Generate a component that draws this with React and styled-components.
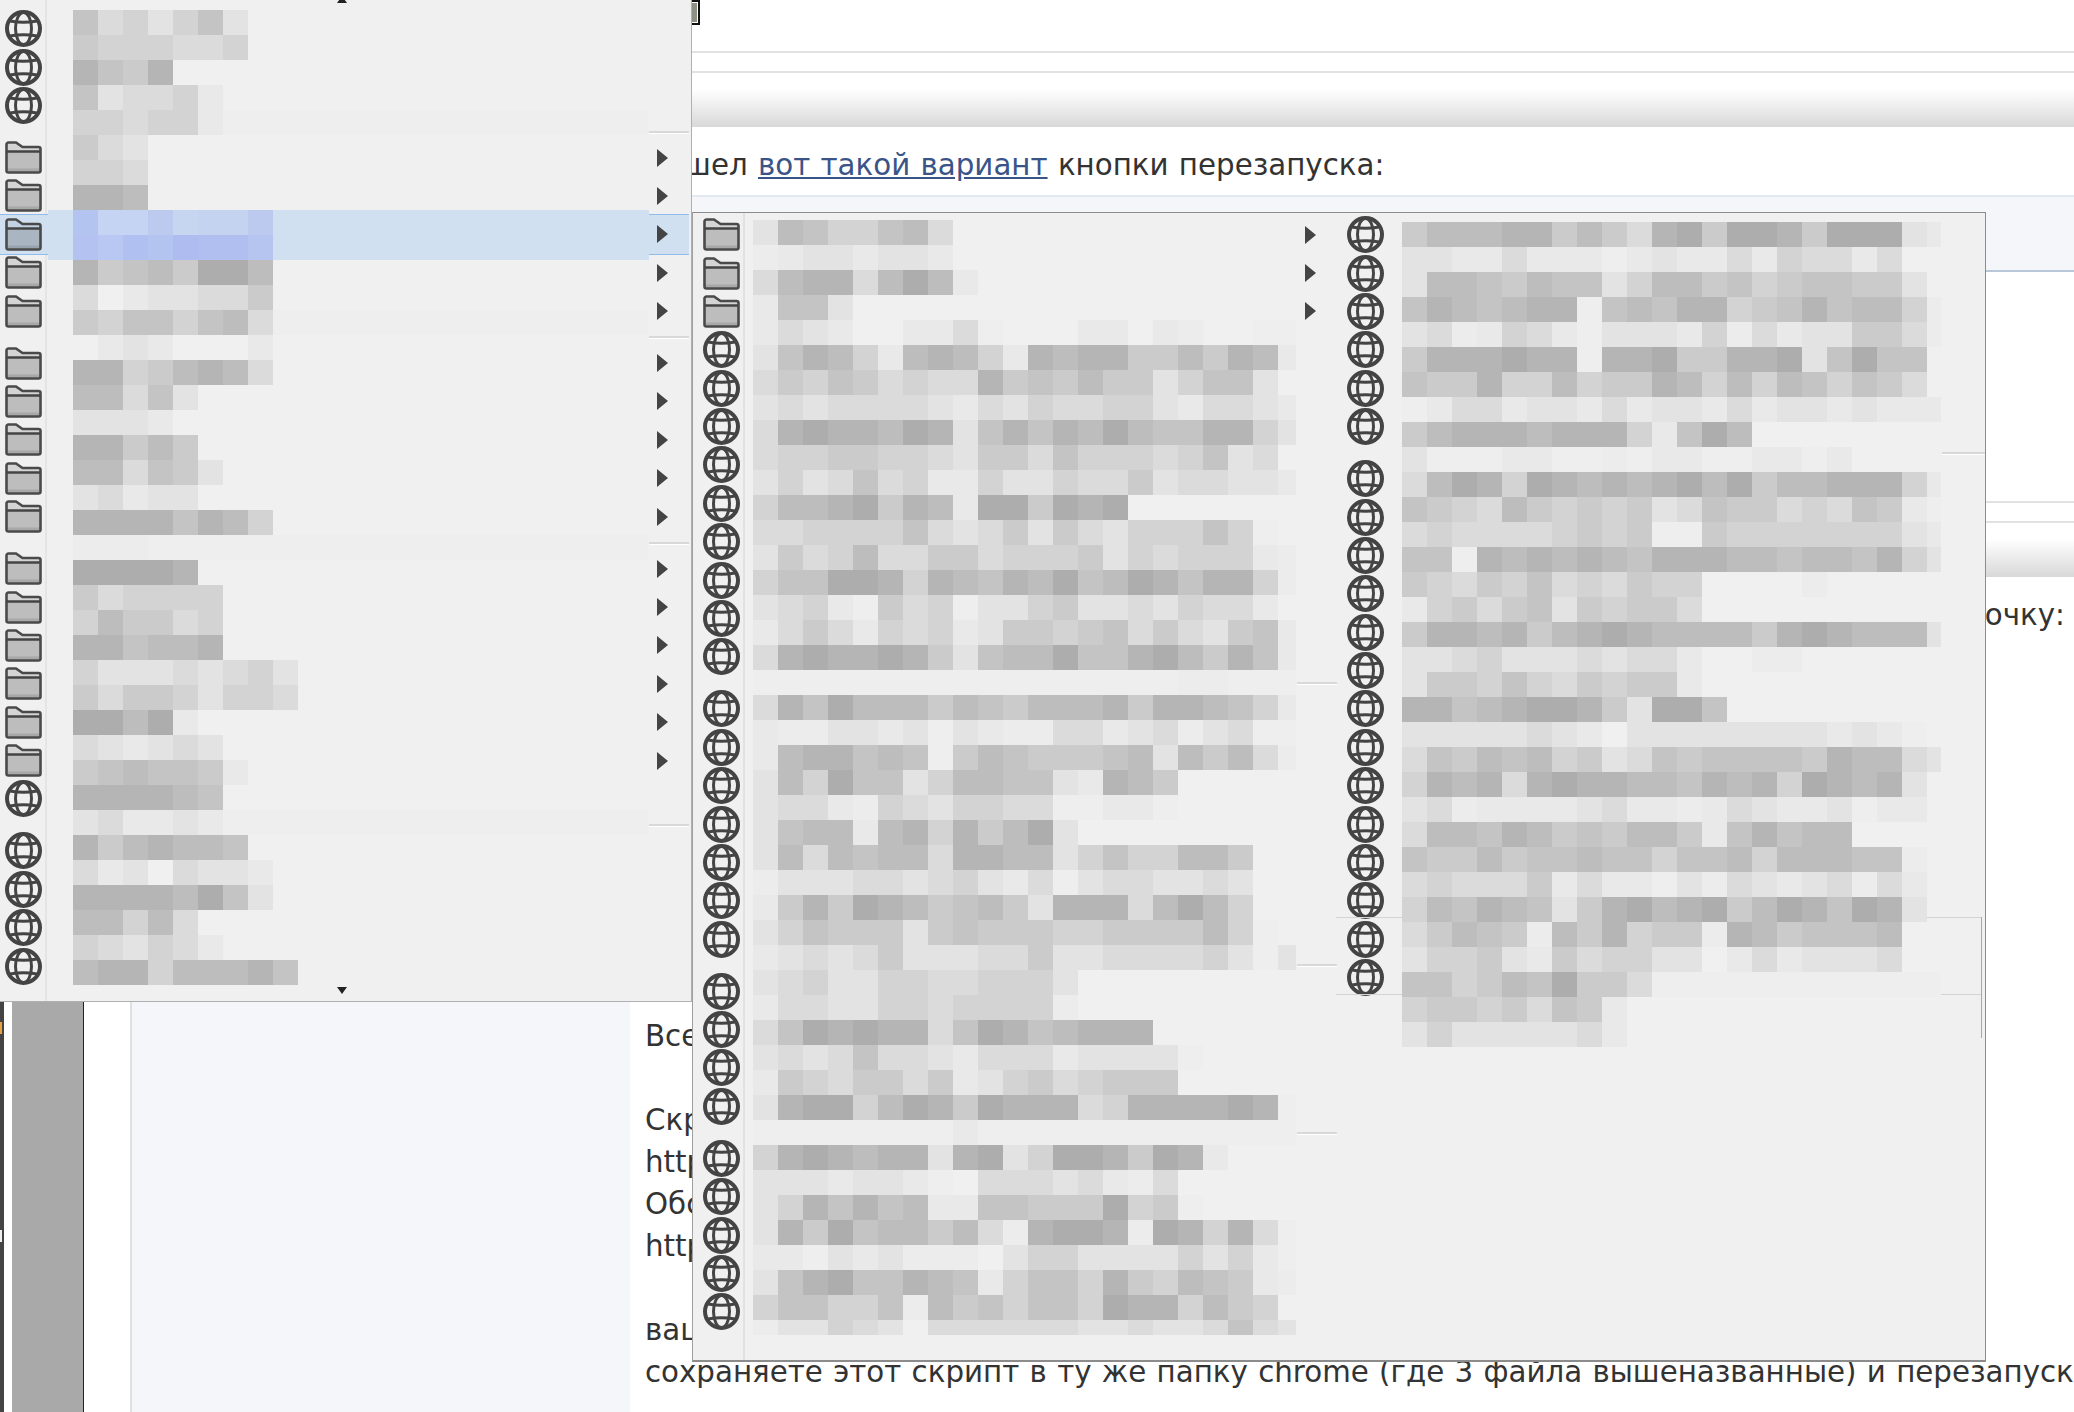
import styled, { createGlobalStyle } from "styled-components";

const GlobalStyle = createGlobalStyle`
  html, body {
    margin: 0;
    height: 100%;
    overflow: hidden;
    background: #fff;
  }
`;

// gray steps for the blurred (pixelated) menu labels
const SHADES = {
  0: "#adadad",
  1: "#b5b5b5",
  2: "#bdbdbd",
  3: "#c4c4c4",
  4: "#cbcbcb",
  5: "#d3d3d3",
  6: "#dbdbdb",
  7: "#e3e3e3",
  8: "#e9e9e9",
  9: "#f0f0f0",
  x: "#ececec",
  y: "#eeeeee",
};

const MENU_ONE_ROWS = [
  "3657537",
  "4555665",
  "1341",
  "376658",
  "556558~",
  "467",
  "556",
  "112",
  ["#b3c4f0", "#c4d4f2", "#c4d4f2", "#bccaf0", "#c6d6f0", "#c4d4f0", "#c4d4f0", "#bccaf0"],
  ["#b3c2f0", "#b8c8f2", "#b0c0f0", "#b4c4f0", "#aebcf0", "#b0bef0", "#b0bef0", "#b6c4f0"],
  "14324002",
  "69877664",
  "45335326~",
  "98789998",
  "11542126",
  "22637",
  "77789",
  "11424",
  "226347",
  "7687799",
  "11113125",
  "xxxyyyyy~",
  "00001",
  "465555",
  "524465",
  "113221",
  "577767657",
  "464457556",
  "00208",
  "6787679",
  "4323348",
  "111123",
  "768878~",
  "1421223",
  "68796778",
  "11112037",
  "22526",
  "567568",
  "211522213",
];

const MENU_TWO_ROWS = [
  "72355326",
  "x8778778",
  "621162028",
  "8337",
  "8678..886y...88.8x..yy",
  "7312582125812114424128",
  "6453465661434244753379",
  "7676666786756655786678",
  "6101120173131202331157",
  "6554455674463555653769",
  "7576365885775664766778",
  "522104128004010",
  "66555536764746755535y9",
  "746526644655547565558x",
  "533001512312032013115x",
  "7658y465y7754776756689",
  "8646856587445436467438",
  "6101101473220331024138",
  "yyyyyyyyyyyyyyyyyxxyyy",
  "6130222423422214112358",
  "8xx7787y78xx66876x76yy",
  "8211323y4234443272426x",
  "72503375223378124",
  "7668x5675566yy88y",
  "7322821514207",
  "72623226112275355224",
  "x77766765786y7667767",
  "84140124324711162025",
  "75344474344455444425y",
  "87676477766477666657y7",
  "7657755665557",
  "866775565555x",
  "6301011630132111",
  "76763667866687777y",
  "84564464875465444",
  "710052014011165111101y",
  "yyyyyyyy8yyyyyyyyyyyyy",
  "5101211710750014018",
  "7778778y9666768x6",
  "75131328833444054y",
  "7140322426x1001x01516y",
  "88y787xxx975577775758y",
  "731033123853351452348x",
  "533553x243533501152459",
  "x775679666666776776367",
];

const MENU_THREE_ROWS = [
  "4222114246104001400078",
  "77886888y87886856686",
  "722342337522435433447",
  "3123211y3231154313225x",
  "76x8568y77785x6877446x",
  "4111011y11044110730339",
  "344155254412525235346",
  "y866877868778687787888",
  "42111211158302",
  "7yyy88yyxy88yy88y8",
  "6201501212102042211158",
  "345624545476344656348y",
  "6566665454yy4555555578",
  "33y1212123111223223157",
  "456453656455....x",
  "854643745446",
  "4112142101222241012227",
  "776577767668..xx",
  "744535645448",
  "1132100147003",
  "77777678977777777878y",
  "6342325476343333412267",
  "512161011223121501217",
  "76x88887688x867887y88",
  "622312434224831322",
  "34424332335332522233x",
  "6566648688y7x67876x68",
  "523123741021042013017",
  "64234x241544x1243332",
  "75547846557798687776",
  "3354230446yyyyyyyyyyyy",
  "544546348",
  "757777768",
];

const Page = styled.div`
  position: relative;
  display: flex;
  width: 2074px;
  height: 1412px;
  overflow: hidden;
  background: #fff;
  font-family: "DejaVu Sans", Verdana, sans-serif;
  font-size: 29.3px;
  line-height: 42px;
  word-spacing: 1px;
  color: #333;
`;

const Rail = styled.div`
  position: relative;
  flex: none;
  width: 4px;
  margin-right: 8px;
  background: #444;
`;

const RailMark = styled.span`
  position: absolute;
  left: 0;
  top: ${(props) => props.$top}px;
  width: 2px;
  height: 12px;
  background: ${(props) => props.$color};
`;

const GraySide = styled.div`
  flex: none;
  width: 71px;
  background: #a9a9a9;
  border-right: 1px solid #222;
`;

const WhiteGap = styled.div`
  flex: none;
  width: 46px;
`;

const AuthorPanel = styled.div`
  flex: none;
  width: 498px;
  background: #f4f6fa;
  border-left: 2px solid #e0e0e0;
`;

const Main = styled.main`
  flex: 1;
  min-width: 0;
`;

const TopRow = styled.div`
  height: 51px;
  display: flex;
  justify-content: flex-start;
`;

const OldButton = styled.div`
  width: 70px;
  height: 25px;
  box-sizing: border-box;
  background: #8d9284;
  border: 3px solid #fff;
  outline: 2px solid #111;
  outline-offset: -2px;
`;

const Rule = styled.div`
  height: 18px;
  border-top: 2px solid #e2e2e2;
  border-bottom: 2px solid #e2e2e2;
`;

const HeaderBar = styled.div`
  height: 54px;
  background: linear-gradient(#fff 30%, #d8d8d8 100%);
`;

const Post = styled.div`
  padding: 17px 15px 9px 17px;
  white-space: nowrap;
`;

const PostRight = styled(Post)`
  text-align: right;
  padding-right: 9px;
`;

const PostLink = styled.a`
  color: #3a5488;
  text-decoration: underline;
`;

const CodeBand = styled.div`
  height: 73px;
  background: #f4f6fa;
  border-top: 2px solid #e4e8f0;
  border-bottom: 2px solid #b8c8d8;
`;

const BlankArea = styled.div`
  height: ${(props) => props.$height}px;
`;

const TextLines = styled.div`
  padding-left: 15px;
  white-space: nowrap;
`;

const TextLine = styled.div`
  height: 42px;
`;

const MenuOne = styled.div`
  position: absolute;
  left: 0;
  top: 0;
  width: 692px;
  height: 1002px;
  box-sizing: border-box;
  padding: 9.5px 2px 0 0;
  background: linear-gradient(#e4e4e4, #e4e4e4) no-repeat 45px 0 / 2px 100% #f0f0f0;
  border-right: 1px solid #b0b0b0;
  border-bottom: 1px solid #b0b0b0;
`;

const MenuTwo = styled.div`
  position: absolute;
  left: 692px;
  top: 212px;
  width: 1294px;
  height: 1150px;
  box-sizing: border-box;
  display: flex;
  padding-top: 2.5px;
  background: #f0f0f0;
  border: 1px solid #8c8c8c;
  border-bottom-width: 2px;
  border-left-color: #a0a0a0;
`;

const Column = styled.div`
  flex: none;
  width: ${(props) => props.$width}px;
  height: 100%;
  margin-top: -2.5px;
  padding-top: 2.5px;
  background: ${(props) =>
    props.$gutter
      ? `linear-gradient(#e2e2e2, #e2e2e2) no-repeat ${props.$gutter}px 0 / 2px 100%`
      : "none"};
`;

const Row = styled.div`
  display: flex;
  align-items: center;
  height: 38.38px;
  padding-left: ${(props) => props.$pad}px;
  padding-right: ${(props) => props.$arrowGap}px;
  box-sizing: border-box;
`;

const ActiveRow = styled(Row)`
  height: 41.38px;
  margin: -1.5px 0;
  background: #d0e0f1;
  border-top: 1px solid #90bcec;
  border-bottom: 1px solid #90bcec;
  position: relative;
`;

const Separator = styled.div`
  height: 13.7px;
  box-sizing: border-box;
  padding-top: 6px;
  margin-left: ${(props) => props.$inset}px;
  &::after {
    content: "";
    display: block;
    height: 2px;
    background: #d8d8d8;
    border-bottom: 1px solid #fff;
  }
`;

const Spacer = styled.span`
  flex: 1;
`;

const Mosaic = styled.div`
  position: absolute;
  left: ${(props) => props.$left}px;
  top: ${(props) => props.$top}px;
  width: ${(props) => props.$width}px;
`;

const MosaicRow = styled.div`
  display: flex;
  height: ${(props) => props.$height || 25}px;
  background: ${(props) => (props.$fill ? "#d0e0f1" : "none")};
`;

const Cell = styled.div`
  flex: none;
  width: 25px;
  &:nth-child(22) {
    width: ${(props) => props.$lastWidth}px;
  }
`;

const ScrollMark = styled.svg`
  position: absolute;
  left: 337px;
  top: ${(props) => props.$top}px;
`;

const GhostLine = styled.div`
  position: absolute;
  left: 643px;
  top: ${(props) => props.$top}px;
  width: 645px;
  height: 1px;
  background: #d4d4d4;
`;

const GhostEdge = styled.div`
  position: absolute;
  left: 1288px;
  top: 704px;
  width: 1px;
  height: 121px;
  background: #a8a8a8;
`;

const Globe = () => (
  <svg width="37" height="37" viewBox="0 0 37 37" fill="none" stroke="#444">
    <circle cx="18.5" cy="18.5" r="16.5" strokeWidth="4" />
    <ellipse cx="18.5" cy="18.5" rx="8" ry="16" strokeWidth="3" />
    <path d="M5 11 Q18.5 13.5 32 11" strokeWidth="3" />
    <path d="M5 26 Q18.5 23.5 32 26" strokeWidth="3" />
  </svg>
);

const Folder = ({ active }) => (
  <svg width="37" height="33" viewBox="0 0 37 33" fill="none">
    <path
      d="M3.5 1.5H11L17.5 6H33.5a2 2 0 0 1 2 2V29.5a2 2 0 0 1-2 2H3.5a2 2 0 0 1-2-2V3.5a2 2 0 0 1 2-2Z"
      fill={active ? "#a9b6c2" : "#bdbdbd"}
    />
    <path
      d="M3.5 1.5H11L17.5 6H33.5a2 2 0 0 1 2 2V11H1.5V3.5a2 2 0 0 1 2-2Z"
      fill={active ? "#c2d2e2" : "#d4d4d4"}
    />
    <path d="M2.5 27.5H34.5V30.5H2.5Z" fill={active ? "#97a3af" : "#a8a8a8"} />
    <path
      d="M3.5 1.5H11L17.5 6H33.5a2 2 0 0 1 2 2V29.5a2 2 0 0 1-2 2H3.5a2 2 0 0 1-2-2V3.5a2 2 0 0 1 2-2Z"
      stroke="#4a4a4a"
      strokeWidth="2.6"
    />
    <path d="M2 10.5H35" stroke="#444" strokeWidth="2.4" />
  </svg>
);

const Arrow = () => (
  <svg width="11" height="18" viewBox="0 0 11 18">
    <path d="M0 0L11 9L0 18Z" fill="#444" />
  </svg>
);

// groups of menu entries: f = folder with submenu, g = bookmark
const MenuRows = ({ groups, pad, arrowGap, inset, activeIndex }) => {
  let index = -1;
  return groups.map((group, g) => (
    <div key={g}>
      {g > 0 && <Separator $inset={inset} />}
      {group.split("").map((kind, i) => {
        index += 1;
        const active = index === activeIndex;
        const Item = active ? ActiveRow : Row;
        return (
          <Item key={i} $pad={pad} $arrowGap={arrowGap}>
            {kind === "f" ? <Folder active={active} /> : <Globe />}
            <Spacer />
            {kind === "f" && <Arrow />}
          </Item>
        );
      })}
    </div>
  ));
};

const cellColor = (value) => {
  if (value === ".") return undefined;
  return value.startsWith("#") ? value : SHADES[value];
};

const BlurredLabels = ({ rows, left, top, width, lastWidth, lastHeight, columns }) => (
  <Mosaic $left={left} $top={top} $width={width}>
    {rows.map((row, r) => {
      const isBlue = Array.isArray(row);
      let cells = isBlue ? row : row.split("");
      if (cells[cells.length - 1] === "~") {
        cells = cells.slice(0, -1);
        cells = cells.concat(Array(columns - cells.length).fill("y"));
      }
      return (
        <MosaicRow
          key={r}
          $fill={isBlue}
          $height={r === rows.length - 1 ? lastHeight : undefined}
        >
          {cells.map((value, c) => (
            <Cell
              key={c}
              $lastWidth={lastWidth}
              style={{ background: cellColor(value) }}
            />
          ))}
        </MosaicRow>
      );
    })}
  </Mosaic>
);

const App = () => (
  <Page>
    <GlobalStyle />
    <Rail>
      <RailMark $top={1022} $color="#e8a040" />
      <RailMark $top={1230} $color="#eee" />
    </Rail>
    <GraySide />
    <WhiteGap />
    <AuthorPanel />
    <Main>
      <TopRow>
        <OldButton />
      </TopRow>
      <Rule />
      <HeaderBar />
      <Post>
        нашел <PostLink>вот такой вариант</PostLink> кнопки перезапуска:
      </Post>
      <CodeBand />
      <BlankArea $height={229} />
      <Rule />
      <HeaderBar />
      <PostRight>А ещё можно добавить в контекстное меню строчку:</PostRight>
      <BlankArea $height={370} />
      <TextLines>
        <TextLine>Все</TextLine>
        <TextLine />
        <TextLine>Скрипт</TextLine>
        <TextLine>https://</TextLine>
        <TextLine>Обсуждение</TextLine>
        <TextLine>https://</TextLine>
        <TextLine />
        <TextLine>ваш</TextLine>
        <TextLine>
          сохраняете этот скрипт в ту же папку chrome (где 3 файла вышеназванные) и перезапускаете
        </TextLine>
      </TextLines>
    </Main>

    <MenuOne>
      <MenuRows
        groups={["ggg", "fffff", "fffff", "ffffffg", "gggg"]}
        pad={5}
        arrowGap={21}
        inset={649}
        activeIndex={5}
      />
      <ScrollMark $top={-4} width="10" height="7" viewBox="0 0 10 7">
        <path d="M0 7L5 0L10 7Z" fill="#222" />
      </ScrollMark>
      <ScrollMark $top={987} width="10" height="7" viewBox="0 0 10 7">
        <path d="M0 0H10L5 7Z" fill="#222" />
      </ScrollMark>
      <BlurredLabels
        rows={MENU_ONE_ROWS.map((row) => (Array.isArray(row) ? ["#d0e0f1", ...row] : `.${row}`))}
        left={48}
        top={10}
        width={601}
        lastWidth={25}
        columns={24}
      />
    </MenuOne>

    <MenuTwo>
      <Column $width={644} $gutter={50}>
        <MenuRows
          groups={["fffggggggggg", "ggggggg", "gggg", "ggggg"]}
          pad={10}
          arrowGap={21}
          inset={604}
        />
      </Column>
      <Column $width={648}>
        <MenuRows groups={["gggggg", "gggggggggggggg"]} pad={10} arrowGap={0} inset={605} />
      </Column>
      <GhostLine $top={704} />
      <GhostLine $top={781} />
      <GhostEdge />
      <BlurredLabels
        rows={MENU_TWO_ROWS}
        left={60}
        top={7}
        width={543}
        lastWidth={18}
        lastHeight={15}
        columns={22}
      />
      <BlurredLabels
        rows={MENU_THREE_ROWS}
        left={709}
        top={9}
        width={539}
        lastWidth={14}
        columns={22}
      />
    </MenuTwo>
  </Page>
);

export default App;
